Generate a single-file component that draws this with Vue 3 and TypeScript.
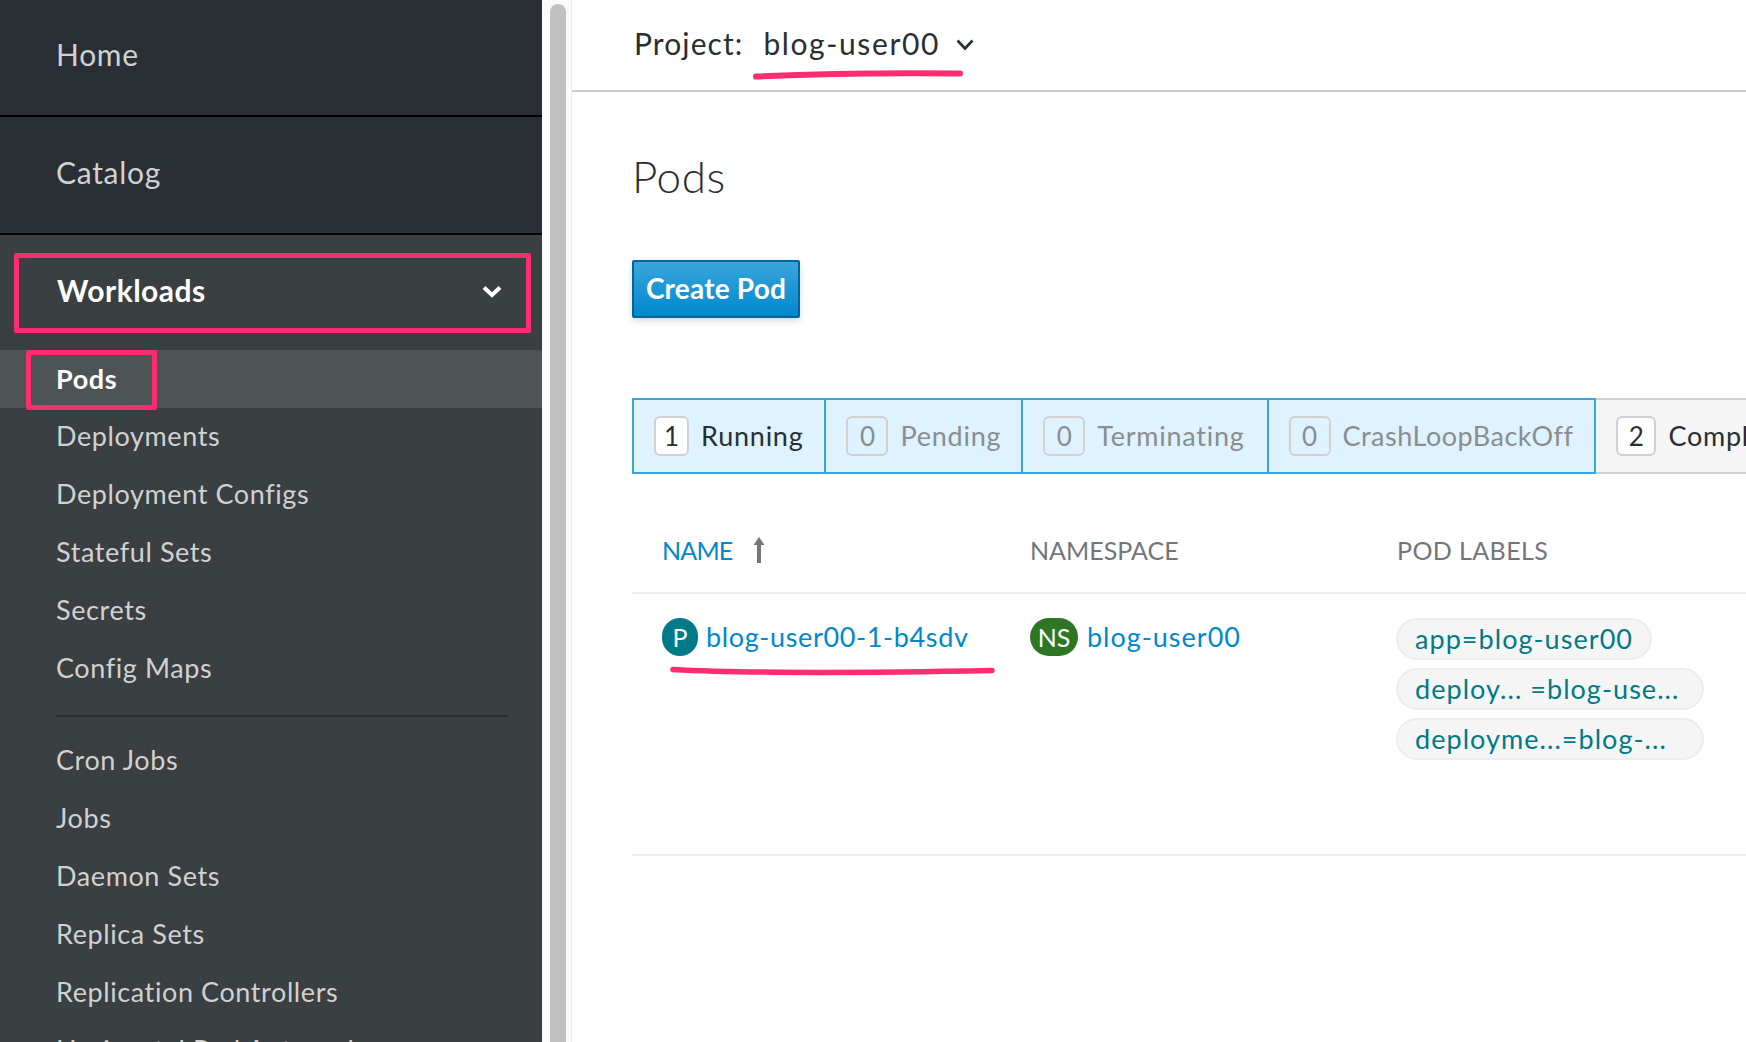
<script setup lang="ts">
interface Tab {
  count: number;
  label: string;
  on: boolean;
}

const groupOne = ['Deployments', 'Deployment Configs', 'Stateful Sets', 'Secrets', 'Config Maps'];
const groupTwo = ['Cron Jobs', 'Jobs', 'Daemon Sets', 'Replica Sets', 'Replication Controllers', 'Horizontal Pod Autoscalers'];

const tabs: Tab[] = [
  { count: 1, label: 'Running', on: true },
  { count: 0, label: 'Pending', on: true },
  { count: 0, label: 'Terminating', on: true },
  { count: 0, label: 'CrashLoopBackOff', on: true },
  { count: 2, label: 'Completed', on: false },
];

const labels = ['app=blog-user00', 'deploy... =blog-use...', 'deployme...=blog-...'];
</script>

<template>
  <div class="page">
    <aside class="sidebar">
      <div class="top-link home">Home</div>
      <div class="top-link catalog">Catalog</div>
      <nav class="nav">
        <div class="section-head">
          <span>Workloads</span>
          <svg class="head-chevron" width="20" height="13" viewBox="0 0 20 13">
            <path d="M2 2.5 L10 10 L18 2.5" fill="none" stroke="#fff" stroke-width="4" />
          </svg>
        </div>
        <div class="nav-item active"><span class="pods-box">Pods</span></div>
        <div v-for="item in groupOne" :key="item" class="nav-item">{{ item }}</div>
        <div class="nav-divider"></div>
        <div v-for="item in groupTwo" :key="item" class="nav-item">{{ item }}</div>
      </nav>
    </aside>

    <div class="gutter"><div class="thumb"></div></div>

    <main class="main">
      <header class="project-bar">
        <span class="project-label">Project:</span>
        <span class="project-name">blog-user00</span>
        <svg class="project-chevron" width="18" height="12" viewBox="0 0 18 12">
          <path d="M1.5 1.5 L9 9.5 L16.5 1.5" fill="none" stroke="#292e34" stroke-width="2.6" />
        </svg>
        <svg class="scribble scribble-project" width="214" height="12" viewBox="0 0 214 12">
          <path d="M5 8.5 C60 6 120 4.5 209 5.5" fill="none" stroke="#ff2d6f" stroke-width="6" stroke-linecap="round" />
        </svg>
      </header>

      <section class="content">
        <h1 class="title">Pods</h1>
        <button class="create-btn">Create Pod</button>

        <div class="filters">
          <div v-for="tab in tabs" :key="tab.label" class="filter" :class="{ on: tab.on, empty: tab.count === 0 }">
            <span class="badge">{{ tab.count }}</span>
            <span class="filter-label">{{ tab.label }}</span>
          </div>
        </div>

        <div class="table-head">
          <div class="col sorted">
            NAME
            <svg class="sort-arrow" width="12" height="26" viewBox="0 0 12 26">
              <path d="M6 0 L11.5 8 H8 V26 H4 V8 H0.5 Z" fill="#72767b" />
            </svg>
          </div>
          <div class="col">NAMESPACE</div>
          <div class="col wide">POD LABELS</div>
        </div>

        <div class="table-row">
          <div class="cell">
            <span class="res-icon pod">P</span>
            <a class="res-link">blog-user00-1-b4sdv</a>
            <svg class="scribble scribble-pod" width="335" height="12" viewBox="0 0 335 12">
              <path d="M5 4.5 C80 8.5 220 7.5 324 5.5" fill="none" stroke="#ff2d6f" stroke-width="5.5" stroke-linecap="round" />
            </svg>
          </div>
          <div class="cell">
            <span class="res-icon ns">NS</span>
            <a class="res-link ns-link">blog-user00</a>
          </div>
          <div class="label-list">
            <span v-for="label in labels" :key="label" class="label">{{ label }}</span>
          </div>
        </div>
      </section>
    </main>
  </div>
</template>

<style>
html,
body {
  margin: 0;
  overflow: hidden;
  background: #fff;
}
</style>

<style scoped>
.page {
  display: flex;
  width: 1746px;
  height: 1042px;
  overflow: hidden;
  font-family: Lato, "Liberation Sans", sans-serif;
  font-variant-ligatures: none;
  color: #292e34;
}

.sidebar {
  width: 542px;
  flex: none;
  height: 1042px;
  overflow: hidden;
  background: #3a3f42;
}

.top-link {
  box-sizing: border-box;
  display: flex;
  align-items: center;
  padding-left: 56px;
  background: #292e34;
  border-bottom: 2px solid #000;
  color: #d1d1d1;
  font-size: 30px;
  letter-spacing: 0.7px;
}

.top-link.home {
  height: 117px;
  padding-bottom: 8px;
}

.top-link.catalog {
  height: 118px;
  padding-bottom: 6px;
}

.nav {
  padding-top: 18px;
}

.section-head {
  height: 80px;
  box-sizing: border-box;
  margin: 0 11px 17px 14px;
  padding: 0 24px 6px 38px;
  display: flex;
  align-items: center;
  justify-content: space-between;
  border: 5px solid #ff2d6f;
  border-radius: 2px;
  color: #fff;
  font-size: 30px;
  font-weight: 700;
  letter-spacing: 0.5px;
}

.head-chevron {
  margin-top: 3px;
}

.nav-item {
  height: 58px;
  box-sizing: border-box;
  display: flex;
  align-items: center;
  padding: 0 0 4px 56px;
  color: #d1d1d1;
  font-size: 27px;
  letter-spacing: 0.6px;
  white-space: nowrap;
}

.nav-item.active {
  background: #4e5356;
  color: #fff;
  font-weight: 700;
  position: relative;
}

.pods-box {
  position: absolute;
  left: 26px;
  top: 0;
  width: 131px;
  height: 60px;
  box-sizing: border-box;
  padding: 0 0 4px 25px;
  display: flex;
  align-items: center;
  border: 5px solid #ff2d6f;
  border-radius: 2px;
}

.nav-divider {
  height: 2px;
  margin: 17px 34px 15px 56px;
  background: #292e34;
}

.gutter {
  width: 30px;
  flex: none;
  box-sizing: border-box;
  padding: 4px 5px 0 8px;
  background: #fafafa;
  border-right: 1px solid #ededed;
}

.thumb {
  width: 16px;
  height: 1100px;
  border-radius: 8px 8px 0 0;
  background: #c1c1c1;
}

.main {
  flex: 1;
  min-width: 0;
  overflow: hidden;
}

.project-bar {
  position: relative;
  height: 92px;
  box-sizing: border-box;
  display: flex;
  align-items: center;
  padding: 0 0 5px 62px;
  border-bottom: 2px solid #ccc;
  font-size: 30px;
  white-space: nowrap;
}

.project-label {
  margin-right: 20px;
  letter-spacing: 1.1px;
}

.project-name {
  letter-spacing: 1.6px;
}

.project-chevron {
  margin-left: 16px;
  margin-top: 5px;
}

.scribble {
  position: absolute;
}

.scribble-project {
  left: 179px;
  top: 68px;
}

.content {
  padding-left: 60px;
}

.title {
  margin: 0;
  height: 168px;
  box-sizing: border-box;
  display: flex;
  align-items: center;
  font-size: 44px;
  font-weight: 300;
  letter-spacing: 0.5px;
}

.create-btn {
  display: block;
  width: 168px;
  height: 58px;
  padding: 0 0 3px;
  border: 2px solid #00659c;
  border-radius: 2px;
  background: linear-gradient(#39a5dc, #0088ce);
  box-shadow: 0 3px 6px rgba(3, 3, 3, 0.15);
  color: #fff;
  font-family: inherit;
  font-size: 28px;
  font-weight: 700;
  letter-spacing: 0.2px;
}

.filters {
  display: flex;
  height: 76px;
  margin-top: 80px;
  white-space: nowrap;
}

.filter {
  height: 76px;
  box-sizing: border-box;
  flex: none;
  display: flex;
  align-items: center;
  padding: 0 21px 0 20px;
  margin-right: -2px;
  background: #f5f5f5;
  border: 2px solid #d1d1d1;
  font-size: 27px;
}

.filter:nth-child(2) {
  padding-right: 20px;
}

.filter:nth-child(3) {
  padding-right: 22px;
}

.filter.on {
  position: relative;
  background: #def3ff;
  border-color: #39a5dc;
}

.filter.empty {
  color: #8b8d8f;
}

.filter-label {
  margin-bottom: 2px;
  letter-spacing: 0.75px;
}

.filter:nth-child(4) .filter-label {
  letter-spacing: 0.5px;
}

.badge {
  min-width: 34px;
  height: 40px;
  box-sizing: border-box;
  padding: 0 8px;
  margin-right: 12px;
  display: flex;
  align-items: center;
  justify-content: center;
  background: #fff;
  border: 2px solid #d1d1d1;
  border-radius: 6px;
  font-size: 26px;
}

.filter:nth-child(5) .badge {
  min-width: 40px;
}

.filter.empty .badge {
  min-width: 42px;
  background: transparent;
}

.table-head,
.table-row {
  display: grid;
  grid-template-columns: 368px 367px 1fr;
  padding-left: 30px;
  border-bottom: 2px solid #ededed;
}

.table-head {
  height: 120px;
  box-sizing: border-box;
  padding-top: 57px;
  color: #72767b;
  font-size: 25px;
  line-height: 38px;
}

.col {
  display: flex;
  align-items: center;
  height: 38px;
}

.col.sorted {
  color: #0088ce;
  letter-spacing: -0.8px;
}

.col.wide {
  letter-spacing: 0.4px;
}

.sort-arrow {
  margin-left: 21px;
}

.table-row {
  box-sizing: content-box;
  padding-top: 24px;
  height: 236px;
}

.cell {
  position: relative;
  display: flex;
  align-items: flex-start;
  height: 38px;
  font-size: 27px;
  white-space: nowrap;
}

.res-icon {
  flex: none;
  height: 38px;
  display: flex;
  align-items: center;
  justify-content: center;
  border-radius: 19px;
  color: #fff;
  font-size: 25px;
}

.res-icon.pod {
  width: 36px;
  margin-right: 8px;
  background: #007a87;
}

.res-icon.ns {
  width: 48px;
  margin-right: 9px;
  background: #2d7623;
}

.res-link {
  color: #0088ce;
  line-height: 38px;
  letter-spacing: 0.65px;
}

.res-link.ns-link {
  letter-spacing: 1px;
}

.scribble-pod {
  left: 6px;
  top: 47px;
}

.label-list {
  display: flex;
  flex-direction: column;
  align-items: flex-start;
  gap: 8px;
  margin-left: -1px;
}

.label {
  height: 42px;
  box-sizing: border-box;
  padding: 0 17px 2px;
  display: flex;
  align-items: center;
  background: #f5f5f5;
  border: 2px solid #ededed;
  border-radius: 21px;
  color: #007a87;
  font-size: 27px;
  letter-spacing: 1.05px;
  white-space: nowrap;
}

.label:nth-child(n + 2) {
  width: 308px;
}
</style>
